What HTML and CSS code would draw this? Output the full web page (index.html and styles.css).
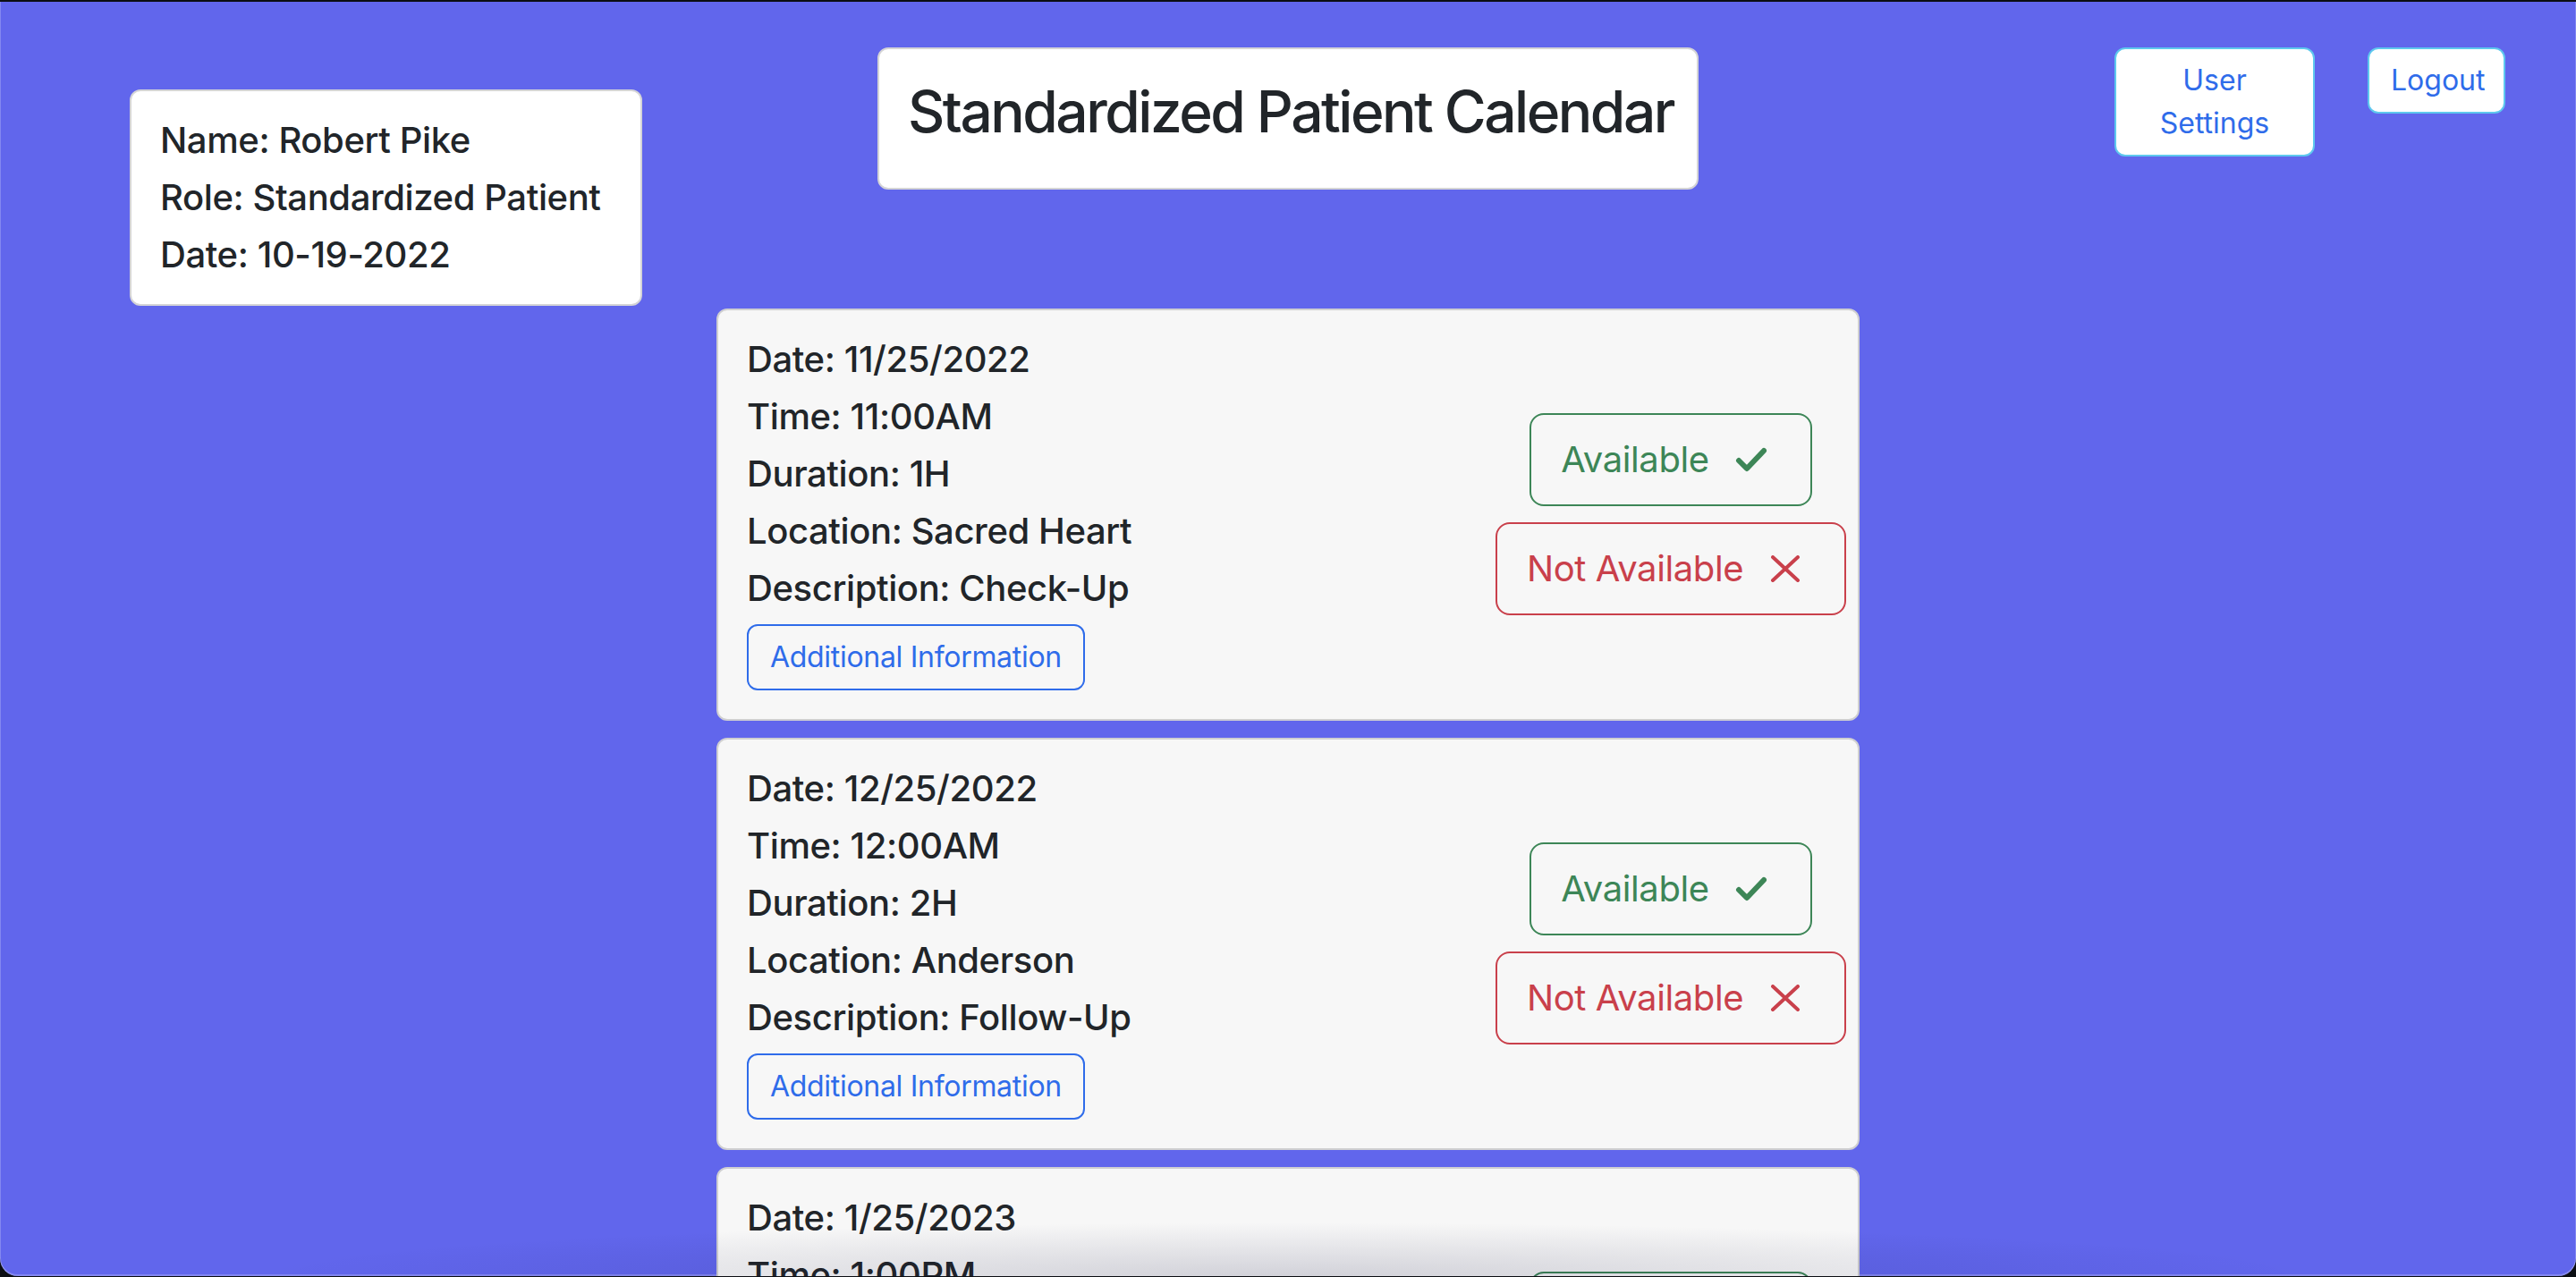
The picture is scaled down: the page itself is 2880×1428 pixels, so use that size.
FILE: index.html
```html
<!DOCTYPE html>
<html lang="en">
<head>
<meta charset="utf-8">
<title>Standardized Patient Calendar</title>
<link rel="stylesheet" href="styles.css">
</head>
<body>
<div class="window">
  <header class="top">
    <div class="info-card">
      <div class="line">Name: Robert Pike</div>
      <div class="line">Role: Standardized Patient</div>
      <div class="line">Date: 10-19-2022</div>
    </div>
    <div class="title-card">
      <h2 class="title">Standardized Patient Calendar</h2>
    </div>
    <nav class="nav">
      <button class="nav-btn settings">User Settings</button>
      <button class="nav-btn logout">Logout</button>
    </nav>
  </header>

  <main class="events">
    <section class="event-card">
      <div class="event-info">
        <div class="line">Date: 11/25/2022</div>
        <div class="line">Time: 11:00AM</div>
        <div class="line">Duration: 1H</div>
        <div class="line">Location: Sacred Heart</div>
        <div class="line">Description: Check-Up</div>
        <button class="info-btn">Additional Information</button>
      </div>
      <div class="event-actions">
        <button class="act-btn avail">Available<span class="icon"><svg width="36" height="30" viewBox="0 0 36 30"><polyline points="4,16 13,25 32,5" fill="none" stroke="currentColor" stroke-width="6" stroke-linecap="round" stroke-linejoin="round"/></svg></span></button>
        <button class="act-btn not-avail">Not Available<span class="icon"><svg width="36" height="30" viewBox="0 0 36 30"><path d="M4 2 L32 28 M32 2 L4 28" fill="none" stroke="currentColor" stroke-width="4" stroke-linecap="round"/></svg></span></button>
      </div>
    </section>

    <section class="event-card">
      <div class="event-info">
        <div class="line">Date: 12/25/2022</div>
        <div class="line">Time: 12:00AM</div>
        <div class="line">Duration: 2H</div>
        <div class="line">Location: Anderson</div>
        <div class="line">Description: Follow-Up</div>
        <button class="info-btn">Additional Information</button>
      </div>
      <div class="event-actions">
        <button class="act-btn avail">Available<span class="icon"><svg width="36" height="30" viewBox="0 0 36 30"><polyline points="4,16 13,25 32,5" fill="none" stroke="currentColor" stroke-width="6" stroke-linecap="round" stroke-linejoin="round"/></svg></span></button>
        <button class="act-btn not-avail">Not Available<span class="icon"><svg width="36" height="30" viewBox="0 0 36 30"><path d="M4 2 L32 28 M32 2 L4 28" fill="none" stroke="currentColor" stroke-width="4" stroke-linecap="round"/></svg></span></button>
      </div>
    </section>

    <section class="event-card">
      <div class="event-info">
        <div class="line">Date: 1/25/2023</div>
        <div class="line">Time: 1:00PM</div>
        <div class="line">Duration: 1H</div>
        <div class="line">Location: Sacred Heart</div>
        <div class="line">Description: Check-Up</div>
        <button class="info-btn">Additional Information</button>
      </div>
      <div class="event-actions">
        <button class="act-btn avail">Available<span class="icon"><svg width="36" height="30" viewBox="0 0 36 30"><polyline points="4,16 13,25 32,5" fill="none" stroke="currentColor" stroke-width="6" stroke-linecap="round" stroke-linejoin="round"/></svg></span></button>
        <button class="act-btn not-avail">Not Available<span class="icon"><svg width="36" height="30" viewBox="0 0 36 30"><path d="M4 2 L32 28 M32 2 L4 28" fill="none" stroke="currentColor" stroke-width="4" stroke-linecap="round"/></svg></span></button>
      </div>
    </section>
  </main>
  <div class="bottom-shade"></div>
</div>
</body>
</html>
```

FILE: styles.css
```css
* { box-sizing: border-box; }

html, body {
  margin: 0;
  padding: 0;
  height: 100%;
  overflow: hidden;
}

body {
  background: #0c0e13;
  font-family: Inter, "Noto Sans", "Liberation Sans", sans-serif;
  color: #212529;
}

.window {
  position: relative;
  height: 1425px;
  margin-top: 2px;
  background: #6166ec;
  border-radius: 0 0 20px 20px;
  overflow: hidden;
  padding-top: 51px;
  box-shadow: inset 1px 0 0 rgba(255, 255, 255, 0.22),
              inset -1px 0 0 rgba(255, 255, 255, 0.22),
              inset 0 -2px 0 rgba(255, 255, 255, 0.22);
}

.top {
  display: grid;
  grid-template-columns: 1fr auto 1fr;
  align-items: start;
}

.line {
  font-size: 40px;
  line-height: 48px;
  font-weight: 500;
  margin: 0 0 16px;
  white-space: nowrap;
  letter-spacing: -0.4px;
}

.info-card {
  justify-self: start;
  margin-left: 145px;
  margin-top: 47px;
  width: 573px;
  background: #ffffff;
  border: 2px solid #d4d4d6;
  border-radius: 12px;
  padding: 31px 32px;
}

.info-card .line:last-child { margin-bottom: 0; }

.title-card {
  width: 918px;
  background: #ffffff;
  border: 2px solid #d4d4d6;
  border-radius: 12px;
  padding: 31px 32px;
  text-align: center;
}

.title {
  margin: 0 0 16px;
  font-size: 64px;
  line-height: 77px;
  font-weight: 500;
  white-space: nowrap;
  letter-spacing: -2.5px;
}

.nav {
  justify-self: end;
  display: flex;
  align-items: flex-start;
  gap: 59px;
  padding-right: 79px;
}

.nav-btn {
  background: #ffffff;
  border: 2px solid #5ec8ee;
  color: #2f6cea;
  font-family: Inter, "Noto Sans", sans-serif;
  font-size: 32px;
  line-height: 48px;
  padding: 11px 24px;
  border-radius: 12px;
  text-align: center;
}

.settings { width: 224px; }
.logout { width: 154px; }

.events {
  width: 1278px;
  margin: 3px auto 0;
  display: flex;
  flex-direction: column;
  gap: 19px;
}

.event-card {
  display: flex;
  align-items: center;
  background: #f7f7f7;
  border: 2px solid #cfcfd1;
  border-radius: 12px;
  padding: 31px 32px 32px;
  flex-shrink: 0;
}

.event-info { flex: 1; }

.info-btn {
  display: block;
  background: transparent;
  border: 2px solid #2f6cea;
  color: #2f6cea;
  font-family: Inter, "Noto Sans", sans-serif;
  font-size: 32px;
  line-height: 48px;
  padding: 11px 24px;
  border-radius: 12px;
  letter-spacing: -0.3px;
}

.event-actions {
  width: 354px;
  display: flex;
  flex-direction: column;
  align-items: center;
  gap: 18px;
}

.act-btn {
  display: inline-flex;
  align-items: center;
  white-space: nowrap;
  background: transparent;
  border: 2px solid currentColor;
  font-family: Inter, "Noto Sans", sans-serif;
  font-size: 40px;
  line-height: 60px;
  padding: 20px 48px 20px 33px;
  border-radius: 16px;
  letter-spacing: -0.4px;
}

.avail { color: #3d8657; }
.not-avail { color: #c9404b; }

.icon {
  display: inline-flex;
  width: 36px;
  height: 30px;
  margin-left: 29px;
}

.bottom-shade {
  position: absolute;
  left: 0;
  right: 0;
  bottom: 0;
  height: 60px;
  pointer-events: none;
  background: radial-gradient(ellipse 40% 100% at 50% 100%, rgba(15, 15, 60, 0.16), rgba(15, 15, 60, 0) 100%);
}
```
